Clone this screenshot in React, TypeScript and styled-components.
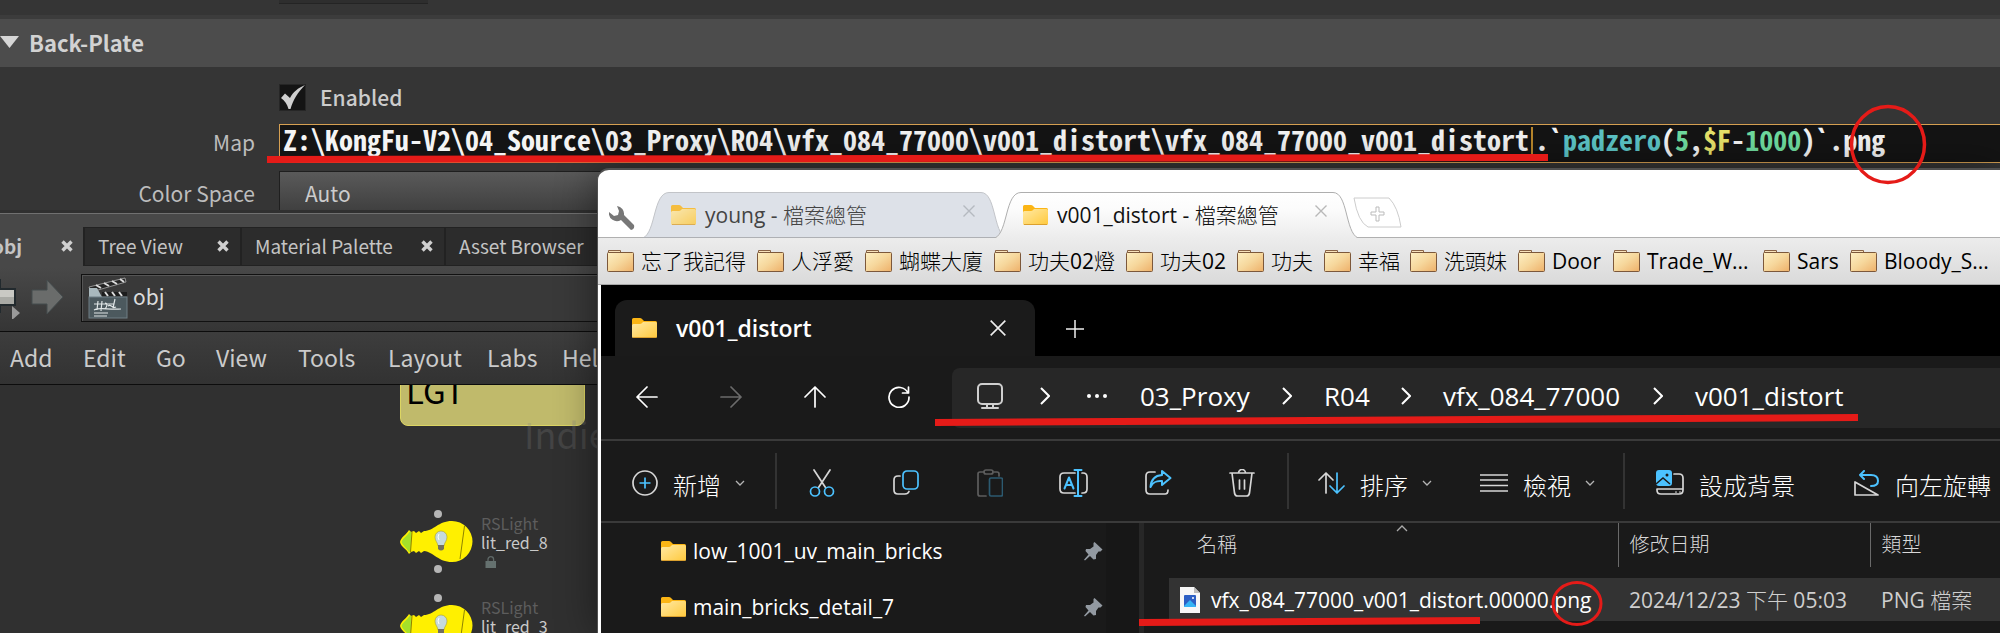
import React from "react";
import styled, { createGlobalStyle, css } from "styled-components";

const hostFont = `"Noto Sans CJK TC", "Noto Sans", sans-serif`;
const winFont = `"Open Sans", "Noto Sans CJK TC Light", "Noto Sans CJK TC", sans-serif`;
const codeFont = `"Noto Sans Mono CJK TC", "DejaVu Sans Mono", monospace`;

const GlobalStyle = createGlobalStyle`
  *, *::before, *::after { box-sizing: border-box; }
  body { margin: 0; background: #303030; }
  button, input, select { font: inherit; color: inherit; margin: 0; }
  button { background: none; border: 0; padding: 0; text-align: left; white-space: nowrap; }
  a { color: inherit; text-decoration: none; }
  svg { display: block; flex: none; }
`;

const Desktop = styled.div`
  position: relative;
  display: flex;
  flex-direction: column;
  min-height: 100vh;
  overflow: hidden;
  background: #303030;
  color: #cccccc;
  font: 21px/28px ${hostFont};
`;

/* ---------- parameter pane ---------- */

const PreviousRow = styled.div`
  height: 19px;
  padding-left: 279px;
  background: #353535;
  border-bottom: 4px solid #3c3c3c;
`;
const PreviousField = styled.div`
  width: 149px;
  height: 4px;
  background: #2e2e2e;
  border-bottom: 1px solid #242424;
`;
const SectionHeader = styled.h2`
  display: flex;
  align-items: center;
  gap: 10px;
  height: 48px;
  margin: 0;
  padding-bottom: 2px;
  background: #4c4c4c;
  color: #d2d2d2;
  font-size: 22px;
  font-weight: 700;
`;
const Params = styled.div`
  display: grid;
  grid-template-columns: 255px minmax(0, 1fr);
  grid-template-rows: 32px 39px 39px;
  gap: 8px 24px;
  align-items: center;
  height: 143px;
  padding-top: 17px;
  background: #353535;
`;
const ParamLabel = styled.label<{ $low?: boolean }>`
  padding: ${(p) => (p.$low ? "4px 0 0" : "0 0 4px")};
  text-align: right;
  color: #bdbdbd;
`;
const CheckRow = styled.label`
  grid-column: 2;
  align-self: start;
  display: flex;
  align-items: center;
  gap: 14px;
  height: 27px;
  font-weight: 500;
`;
const CheckText = styled.span`padding-bottom: 2px;`;
const CheckBoxInput = styled.input`
  appearance: none;
  width: 27px;
  height: 27px;
  background: #141414;
  border: 1px solid #262626;
`;
const CheckBox = styled.span`
  position: relative;
  display: block;
  height: 27px;
  svg { position: absolute; inset: 0; pointer-events: none; }
`;
const MapField = styled.div`
  position: relative;
  display: flex;
  align-items: center;
  height: 39px;
  padding: 0 0 10px 3px;
  background: #141414;
  border: 1px solid #d6a052;
  border-right: 0;
  font: 700 28px/36px ${codeFont};
  color: #f4f4f4;
  white-space: pre;
`;
const MapInput = styled.input`
  position: absolute;
  inset: 0;
  width: 100%;
  padding: 0 3px;
  border: 0;
  outline: 0;
  background: transparent;
  color: transparent;
  caret-color: #b8862b;
`;
const Caret = styled.span`
  width: 2px;
  height: 28px;
  margin: 4px 2px 0;
  background: #b8862b;
`;
const Tint = styled.span<{ $c: string }>`color: ${(p) => p.$c};`;
const ColorSelect = styled.select`
  appearance: none;
  width: 420px;
  height: 39px;
  padding: 4px 25px 0;
  border: 0;
  border-top: 1px solid #1f1f1f;
  border-left: 1px solid #1f1f1f;
  border-radius: 0;
  background: linear-gradient(#5a5a5a, #404040);
`;

/* ---------- network pane ---------- */

const PaneTabs = styled.div`
  display: flex;
  height: 55px;
  padding-top: 13px;
  background: #484848;
  border-top: 1px solid #707070;
  margin-top: 3px;
  font-size: 19px;
`;
const PaneTab = styled.div<{ $w: number; $active?: boolean }>`
  display: flex;
  align-items: center;
  justify-content: space-between;
  flex: none;
  width: ${(p) => p.$w}px;
  height: 39px;
  padding: 0 11px 2px 13px;
  background: #2c2c2c;
  border: solid #222;
  border-width: 1px 0 1px 2px;
  color: #c4c4c4;
  ${(p) => p.$active && css`
    background: #484848;
    border-color: transparent;
    padding: 0 10px 2px 0;
    font-weight: 700;
    & > button:first-child { margin-left: -10px; }
  `}
`;
const PathRow = styled.div`
  display: flex;
  align-items: center;
  gap: 17px;
  height: 63px;
  padding-bottom: 3px;
  background: linear-gradient(#484848, #353535);
`;
const PathField = styled.div`
  display: flex;
  align-items: center;
  flex: 1;
  gap: 5px;
  height: 48px;
  padding-left: 6px;
  background: #393939;
  border: 1px solid #111;
  box-shadow: inset 1px 1px #555;
  color: #dcdcdc;
`;
const PathName = styled.span`padding-bottom: 4px;`;
const MenuBar = styled.nav`
  display: flex;
  align-items: center;
  height: 54px;
  padding: 0 0 2px 10px;
  background: linear-gradient(#3d3d3d, #323232);
  border: solid #0c0c0c;
  border-width: 1px 0;
  font-size: 23px;
  color: #cbcbcb;
`;
const MenuItem = styled.button<{ $w: number }>`
  width: ${(p) => p.$w}px;
  flex: none;
`;
const Network = styled.main`
  position: relative;
  flex: 1;
  min-height: 246px;
  overflow: hidden;
`;
const StickyNote = styled.div`
  position: absolute;
  left: 400px;
  top: -20px;
  width: 185px;
  height: 61px;
  padding: 0 5px;
  border: 1px solid #dcd562;
  border-radius: 8px;
  background: #c0ba6b;
  color: #000;
  font-size: 33px;
  line-height: 48px;
`;
const Watermark = styled.div`
  position: absolute;
  left: 524px;
  top: 22px;
  font-size: 36px;
  line-height: 52px;
  color: rgba(130, 130, 130, 0.25);
`;
const LightNode = styled.div<{ $y: number }>`
  position: absolute;
  left: 400px;
  top: ${(p) => p.$y}px;
  display: flex;
  gap: 7px;
`;
const NodeText = styled.div`
  padding-top: 5px;
  font-size: 16px;
  line-height: 19px;
  color: #c9c9c9;
  svg { margin: 4px 0 0 4px; }
`;
const NodeType = styled.div`color: #5d5d5d;`;

/* ---------- explorer window ---------- */

const Window = styled.section`
  position: absolute;
  left: 597px;
  right: 0;
  top: 168px;
  bottom: 0;
  display: flex;
  flex-direction: column;
  border: solid #505050;
  border-width: 2px 0 0 1px;
  border-radius: 12px 0 0 0;
  padding-left: 3px;
  background: #fff;
  overflow: hidden;
  font: 21px/28px ${winFont};
  color: #000;
`;
const WindowShadow = styled.div`
  position: absolute;
  left: 597px;
  right: 0;
  top: 168px;
  bottom: 0;
  border-radius: 12px 0 0 0;
  box-shadow: 0 0 40px rgba(0, 0, 0, 0.45);
`;
const BrowserTabs = styled.div`
  display: flex;
  align-items: flex-end;
  height: 68px;
  flex: none;
  margin-left: -3px;
  border-bottom: 1px solid #b0b0b0;
`;
const WrenchButton = styled.button`
  align-self: flex-end;
  width: 45px;
  height: 45px;
  padding: 6px 0 0 11px;
`;
const BrowserTab = styled.div<{ $active?: boolean }>`
  position: relative;
  display: flex;
  align-items: center;
  flex: none;
  width: 364px;
  height: 46px;
  gap: 8px;
  padding: 0 32px 0 28px;
  color: ${(p) => (p.$active ? "#111" : "#444")};
  margin: 0 -12px -1px 0;
  ${(p) => p.$active && css`z-index: 1;`}
  & > svg:first-child { position: absolute; inset: 0; }
  & > * { position: relative; }
  & > button:last-child { margin: 0 0 8px auto; }
`;
const NewTabButton = styled.button`
  margin: 0 0 9px 6px;
`;
const Bookmarks = styled.nav`
  display: flex;
  align-items: center;
  flex: none;
  height: 47px;
  margin-left: -3px;
  padding-left: 9px;
  background: linear-gradient(#ececec, #dadada);
  border-bottom: 1px solid #a8a8a8;
`;
const Bookmark = styled.a<{ $w: number }>`
  display: flex;
  align-items: center;
  flex: none;
  gap: 7px;
  width: ${(p) => p.$w}px;
  white-space: nowrap;
`;
const Explorer = styled.div`
  flex: 1;
  display: flex;
  flex-direction: column;
  background: #1a1a1a;
  color: #fff;
`;
const TitleBar = styled.div`
  display: flex;
  align-items: flex-end;
  height: 71px;
  flex: none;
  padding-left: 14px;
  background: #000;
`;
const ExplorerTab = styled.div`
  display: flex;
  align-items: center;
  width: 420px;
  height: 56px;
  padding: 0 29px 0 17px;
  border-radius: 12px 12px 0 0;
  background: #1b1b1b;
  font-size: 23px;
  font-weight: 600;
  & > button:first-child { display: flex; align-items: center; gap: 18px; }
  & > button:last-child { margin-left: auto; }
`;
const AddTab = styled.button`
  width: 80px;
  height: 54px;
  padding-left: 31px;
`;
const NavRow = styled.div`
  display: flex;
  align-items: center;
  height: 83px;
  flex: none;
`;
const NavButton = styled.button`
  display: grid;
  place-items: center;
  flex: none;
  width: 84px;
  height: 60px;
`;
const NavButtons = styled.div`
  display: flex;
  flex: none;
  width: 351px;
  padding: 0 0 2px 4px;
`;
const AddressBar = styled.div`
  display: flex;
  align-items: center;
  flex: 1;
  height: 60px;
  padding: 0 0 3px 25px;
  border-radius: 8px 0 0 8px;
  background: #272727;
  font-size: 26px;
  line-height: 36px;
`;
const Ellipsis = styled.button`margin-right: 33px;`;
const Crumb = styled.a<{ $w: number }>`
  flex: none;
  width: ${(p) => p.$w}px;
  white-space: nowrap;
`;
const CrumbChevron = styled.svg<{ $gap?: number }>`
  margin: 0 ${(p) => p.$gap ?? 32}px;
`;
const Toolbar = styled.div`
  display: flex;
  align-items: center;
  height: 84px;
  flex: none;
  border: solid #3a3a3a;
  border-width: 2px 0;
  font-size: 24px;
  line-height: 36px;
`;
const ToolButton = styled.button<{ $w: number; $lead?: number }>`
  display: flex;
  align-items: center;
  flex: none;
  gap: 14px;
  width: ${(p) => p.$w}px;
  padding: 4px 0 0 ${(p) => p.$lead ?? 31}px;
`;
const ToolLabel = styled.span`padding: 5px 0 0 1px;`;
const Rule = styled.span`
  flex: none;
  width: 2px;
  height: 56px;
  background: #333;
`;
const ToolIcons = styled.div`
  display: flex;
  margin: 0 3px;
  padding-top: 3px;
`;
const Body = styled.div`
  flex: 1;
  display: flex;
  min-height: 110px;
  overflow: hidden;
`;
const SidePane = styled.nav`
  width: 543px;
  flex: none;
  border-right: 5px solid #272727;
  background: linear-gradient(90deg, #1a1a1a 505px, #171717 505px);
`;
const SideItem = styled.a`
  display: flex;
  align-items: center;
  gap: 6px;
  height: 56px;
  padding: 0 36px 0 60px;
  white-space: nowrap;
  & > svg:last-child { margin-left: auto; }
`;
const Files = styled.div`
  flex: 1;
  padding-left: 25px;
`;
const FileTable = styled.table`
  width: 100%;
  table-layout: fixed;
  border-collapse: collapse;
  white-space: nowrap;
  th { position: relative; height: 44px; padding: 0 11px; font-weight: 400; text-align: left; font-size: 20px; color: #d8d8d8; }
  th:first-child { width: 449px; padding-left: 28px; }
  th:nth-child(2) { width: 252px; }
  th + th { border-left: 1px solid #6a6a6a; }
  tbody::before { content: ""; display: block; height: 11px; }
  td { height: 43px; padding: 0 11px; background: #333; color: #cfcfcf; }
  td:first-child { color: #fff; }
`;
const SortMark = styled.svg`
  position: absolute;
  left: 227px;
  top: 2px;
`;
const FileName = styled.span`
  display: flex;
  align-items: center;
  gap: 11px;
`;
const Marks = styled.svg`
  position: absolute;
  left: 0;
  top: 0;
  pointer-events: none;
`;

/* ---------- icons ---------- */

const PaneClose = () => (
  <svg width="12" height="12" viewBox="0 0 12 12" stroke="#d0d0d0" strokeWidth="3.4"><path d="M1.5 1.5 10.5 10.5M10.5 1.5 1.5 10.5" /></svg>
);
const ThinClose = ({ size, color, w }: { size: number; color: string; w: number }) => (
  <svg width={size} height={size} viewBox="0 0 12 12" stroke={color} strokeWidth={w}><path d="M.5.5 11.5 11.5M11.5.5.5 11.5" /></svg>
);
const Folder = ({ faded }: { faded?: boolean }) => (
  <svg width="26" height="20" viewBox="0 0 26 20" opacity={faded ? 0.8 : 1}>
    <defs><linearGradient id="fy" x1="0" y1="0" x2="1" y2="1"><stop offset="0" stopColor="#ffe9a4" /><stop offset="1" stopColor="#ffc93c" /></linearGradient></defs>
    <path d="M0 1.5Q0 0 1.5 0H8q1 0 1.8.8L12 3h11.500Q25 3 25 4.500V12H0z" fill="#fbb515" />
    <path d="M0 7.500Q0 6 1.500 6H8q1 0 1.800-.800L11 4h12.500Q25 4 25 5.500v13Q25 20 23.500 20h-22Q0 20 0 18.500z" fill="url(#fy)" />
    <path d="M1 19.500h23" stroke="#dba02e" />
  </svg>
);
const BookmarkFolder = () => (
  <svg width="27" height="24" viewBox="0 0 27 24">
    <defs><linearGradient id="fb" x1="0" y1="0" x2="1" y2="1"><stop offset="0" stopColor="#fdf0c4" /><stop offset=".5" stopColor="#f6d79c" /><stop offset="1" stopColor="#eeb069" /></linearGradient></defs>
    <path d="M1.500 5V1.500h12V5" fill="#f9e3bd" stroke="#8a6446" />
    <rect x=".5" y="3.500" width="26" height="19" rx="1" fill="url(#fb)" stroke="#7c583b" />
  </svg>
);
const Chevron = () => (
  <svg width="10" height="6" viewBox="0 0 10 6" fill="none" stroke="#b5b5b5" strokeWidth="1.300"><path d="M1 1 5 5 9 1" /></svg>
);
const Pin = () => (
  <svg width="19" height="19" viewBox="0 0 19 19" fill="#9299a1"><path d="M10.500 0 18.500 7.500 16.500 9.500 14.500 9.500 12 13 12 17 9.500 17.500 6 14 1 18.500 0 17.800 4.500 12.500 1.500 9 2 7 6 7 9.500 4.500 9.500 1z" /></svg>
);
const Bulb = () => (
  <svg width="74" height="66" viewBox="0 0 74 66">
    <circle cx="38" cy="5" r="4" fill="#b5b5b5" /><circle cx="38" cy="60" r="4" fill="#b5b5b5" />
    <path d="M0 33C1 28 6 26 9 21l2 2 3-1 2 2 3-2 2 2 3-2C34 22 38 12 52 12a20.500 20.500 0 0 1 0 41C38 53 34 43 24 42l-3 2-2-2-3 2-2-2-3 1-2 2C6 39 1 38 0 33z" fill="#fff000" />
    <path d="M1.500 33C3 29 7 27 10 22.500l1.500 1-1 19L9 43C6 38 3 37 1.500 33z" fill="#a5e02a" />
    <path d="M12 23 10.500 43M64.500 17 60 50" stroke="#8d8300" fill="none" />
    <path d="M41 22a6 6 0 0 1 6 6c0 4-2.500 5-3 9h-6c-.5-4-3-5-3-9a6 6 0 0 1 6-6z" fill="#c5dade" stroke="#a69c33" strokeWidth=".6" />
    <path d="M38 36h6v4q-3 3-6 0z" fill="#74705f" /><path d="M39 25q-2 3 0 6" stroke="#fff" fill="none" />
  </svg>
);
const Lock = () => (
  <svg width="12" height="12" viewBox="0 0 12 12"><path d="M3 6V3.500a2.800 2.800 0 0 1 5.600 0V6" fill="none" stroke="#5f6968" strokeWidth="1.300" /><rect x=".5" y="5" width="10.500" height="7" fill="#65716f" /></svg>
);
const Clapper = () => (
  <svg width="40" height="42" viewBox="0 0 40 42">
    <path d="M1 10 37 1l1 4L3 15z" fill="#252525" stroke="#bbb" strokeWidth=".7" />
    <path d="m8 8 5 3m3-5 5 3m3-5 5 3m3-5 4 3" stroke="#ddd" strokeWidth="2" />
    <path d="M1 11 9 11 14 20H1z" fill="#a9b8bd" />
    <path d="M14 15h25v4H14z" fill="#1d1d1d" /><path d="m17 15 3 4m4-4 3 4m4-4 3 4" stroke="#ddd" strokeWidth="2" />
    <rect x="1" y="20" width="38" height="21" fill="#4c595e" stroke="#6f7f85" />
    <path d="M6 27h20M10 24l-1 9m5-9-1 10m4-8c3 0 2 4 0 6m3-3c3-3 4 3 8 1m-1-8-2 9M6 33c6-3 14 0 27-1M6 36h14M6 39h13" fill="none" stroke="#dfe5e6" strokeWidth="1.200" />
  </svg>
);
const line = { fill: "none", stroke: "#d6d6d6", strokeWidth: 1.7, strokeLinecap: "round", strokeLinejoin: "round" } as const;
const BLUE = "#4cc2ff";

const toolIcons = [
  { name: "剪下", art: <svg width="26" height="28" viewBox="0 0 26 28" {...line}><path d="M5 1 16.500 18.500M21 1 9.500 18.500" /><g stroke={BLUE}><circle cx="6" cy="22.500" r="4.500" /><circle cx="20" cy="22.500" r="4.500" /></g></svg> },
  { name: "複製", art: <svg width="26" height="28" viewBox="0 0 26 28" {...line}><path d="M7 7H5Q1 7 1 11v10q0 4 4 4h7q3 0 4-2.500" /><rect x="10" y="2" width="15" height="18" rx="4" stroke={BLUE} /></svg> },
  { name: "貼上", art: <svg width="26" height="28" viewBox="0 0 26 28" {...line} stroke="#5e5e5e"><path d="M7 3H3Q1 3 1 5v20q0 2 2 2h6M17 3h3q2 0 2 2v2" /><rect x="7" y="1" width="9" height="4" rx="2" /><rect x="12.500" y="9" width="13" height="18" rx="1.500" stroke="#2c5a70" /></svg> },
  { name: "重新命名", art: <svg width="30" height="28" viewBox="0 0 30 28" {...line}><path d="M16 4H5Q1 4 1 8v12q0 4 4 4h11M23 4h1q4 0 4 4v12q0 4-4 4h-1" /><path d="M5.500 19.500 10 8.500l4.500 11M7 16h6M15.500 1h7M15.500 27h7M19 1v26" stroke={BLUE} strokeWidth="2" /></svg> },
  { name: "共用", art: <svg width="27" height="26" viewBox="0 0 27 26" {...line}><path d="M10 2H5Q1 2 1 6v14q0 4 4 4h15q3 0 3-4" /><path d="M17 1l8.500 7-8.500 7v-4C11 10.500 8 12 5.500 17 6 10 10 5.500 17 5z" stroke={BLUE} strokeWidth="2" /></svg> },
  { name: "刪除", art: <svg width="26" height="28" viewBox="0 0 26 28" {...line}><path d="M1 4h24M9.500 4a3.500 3.500 0 0 1 7 0M3 4l2.500 20q.5 3 3 3h9q2.500 0 3-3L23 4M10.500 11v9M15.500 11v9" /></svg> },
];

const bookmarks: [string, number][] = [
  ["忘了我記得", 150], ["人浮愛", 108], ["蝴蝶大廈", 129], ["功夫02燈", 132], ["功夫02", 111], ["功夫", 87],
  ["幸福", 86], ["洗頭妹", 108], ["Door", 95], ["Trade_W...", 150], ["Sars", 87], ["Bloody_S...", 150],
];
const menus: [string, number][] = [
  ["Add", 73], ["Edit", 73], ["Go", 60], ["View", 82], ["Tools", 90], ["Layout", 99], ["Labs", 75], ["Help", 60],
];
const nodes: [string, number][] = [["lit_red_8", 124], ["lit_red_3", 208]];
const pathText = "Z:\\KongFu-V2\\04_Source\\03_Proxy\\R04\\vfx_084_77000\\v001_distort\\vfx_084_77000_v001_distort";

const TabShape = ({ active }: { active?: boolean }) => (
  <svg width="364" height="46" viewBox="0 0 364 46">
    <defs><linearGradient id="ta" x1="0" y1="0" x2="0" y2="1"><stop offset="0" stopColor="#fff" /><stop offset=".4" stopColor="#fbfbfb" /><stop offset="1" stopColor="#ececec" /></linearGradient></defs>
    <path d="M0 46C13 40 10 .5 26 .5H338C353 .5 350 40 363 46" fill={active ? "url(#ta)" : "#dde1e8"} stroke={active ? "#aeaeae" : "#c2c4c8"} />
    {!active && <path d="M0 45.500h363" stroke="#aeb0b4" />}
  </svg>
);

const CrumbSep = ({ gap }: { gap?: number }) => (
  <CrumbChevron $gap={gap} width="10" height="18" viewBox="0 0 10 18" fill="none" stroke="#fff" strokeWidth="2"><path d="M1 1 9 9 1 17" /></CrumbChevron>
);

export default function App() {
  return (
    <Desktop>
      <GlobalStyle />
      <PreviousRow><PreviousField /></PreviousRow>
      <SectionHeader>
        <svg width="19" height="12" viewBox="0 0 19 12"><path d="M0 0h19L9.500 12z" fill="#d6d6d6" /></svg>
        Back-Plate
      </SectionHeader>
      <Params>
        <CheckRow>
          <CheckBox>
            <CheckBoxInput type="checkbox" defaultChecked />
            <svg width="27" height="27" viewBox="0 0 27 27"><path d="M2 14 6 9.500 11 14C14 8 19 4 26 1 19 8 14 16 11.500 25H9.500C8 20 6 17 2 14z" fill="#cfcfcf" /></svg>
          </CheckBox>
          <CheckText>Enabled</CheckText>
        </CheckRow>
        <ParamLabel htmlFor="map">Map</ParamLabel>
        <MapField>
          <span>{pathText}</span><Caret />
          <span>.`</span><Tint $c="#5cc4c6">padzero</Tint><span>(</span><Tint $c="#6fdc9f">5</Tint><span>,</span>
          <Tint $c="#e8e36a">$F</Tint><span>-</span><Tint $c="#6fdc9f">1000</Tint><span>)`.png</span>
          <MapInput id="map" type="text" />
        </MapField>
        <ParamLabel htmlFor="space" $low>Color Space</ParamLabel>
        <ColorSelect id="space"><option>Auto</option></ColorSelect>
      </Params>

      <PaneTabs>
        <PaneTab $w={83} $active><button>obj</button><button aria-label="Close obj"><PaneClose /></button></PaneTab>
        <PaneTab $w={157}><button>Tree View</button><button aria-label="Close Tree View"><PaneClose /></button></PaneTab>
        <PaneTab $w={204}><button>Material Palette</button><button aria-label="Close Material Palette"><PaneClose /></button></PaneTab>
        <PaneTab $w={204}><button>Asset Browser</button></PaneTab>
      </PaneTabs>
      <PathRow>
        <svg width="64" height="42" viewBox="0 0 64 42">
          <path d="M0 2v10h15v16H0v8" fill="none" stroke="#222a2e" strokeWidth="2" />
          <path d="M0 13h14v14H0z" fill="#c9c9c4" /><path d="M0 20h14v7H0z" fill="#a9aaa5" />
          <path d="m12 29 8 7-8 7z" fill="#9a9a9a" />
          <path d="M32 13h15V3l16 17-16 17V27H32z" fill="#6a6c6b" stroke="#444c4e" />
        </svg>
        <PathField><Clapper /><PathName>obj</PathName></PathField>
      </PathRow>
      <MenuBar>{menus.map(([t, w]) => <MenuItem key={t} $w={w}>{t}</MenuItem>)}</MenuBar>
      <Network>
        <StickyNote>LGT</StickyNote>
        <Watermark>Indie Edition</Watermark>
        {nodes.map(([name, y]) => (
          <LightNode key={name} $y={y}>
            <Bulb />
            <NodeText><NodeType>RSLight</NodeType>{name}<Lock /></NodeText>
          </LightNode>
        ))}
      </Network>

      <WindowShadow />
      <Window>
        <BrowserTabs>
          <WrenchButton aria-label="設定">
            <svg width="26" height="26" viewBox="0 0 26 26"><path d="M8 1A8 8 0 0 1 15 10L25 20Q26 24 22 25L12 15A8 8 0 0 1 0 7L5 11 9 10 10 6z" fill="#777" /></svg>
          </WrenchButton>
          <BrowserTab><TabShape /><Folder faded /><span>young - 檔案總管</span><button aria-label="關閉"><ThinClose size={12} color="#b5b9c0" w={1.4} /></button></BrowserTab>
          <BrowserTab $active><TabShape active /><Folder /><span>v001_distort - 檔案總管</span><button aria-label="關閉"><ThinClose size={12} color="#b8b8b8" w={1.4} /></button></BrowserTab>
          <NewTabButton aria-label="新增分頁">
            <svg width="50" height="31" viewBox="0 0 50 31" fill="none" stroke="#ccc"><path d="M1 1H36Q45 10 48 30H15Q5 25 1 1z" /><path d="M18 15h5v-5h3v5h5v3h-5v6h-3v-6h-5z" stroke="#bbb" /></svg>
          </NewTabButton>
        </BrowserTabs>
        <Bookmarks>
          {bookmarks.map(([t, w]) => <Bookmark key={t} href="#" $w={w}><BookmarkFolder />{t}</Bookmark>)}
        </Bookmarks>
        <Explorer>
          <TitleBar>
            <ExplorerTab>
              <button><Folder />v001_distort</button>
              <button aria-label="關閉分頁"><ThinClose size={16} color="#eee" w={1.2} /></button>
            </ExplorerTab>
            <AddTab aria-label="新增索引標籤"><svg width="18" height="18" viewBox="0 0 18 18" stroke="#eee" strokeWidth="1.500"><path d="M9 0v18M0 9h18" /></svg></AddTab>
          </TitleBar>
          <NavRow>
            <NavButtons>
              <NavButton aria-label="上一頁"><svg width="22" height="22" viewBox="0 0 22 22" {...line} stroke="#fff"><path d="M21 11H1M11 1 1 11 11 21" /></svg></NavButton>
              <NavButton aria-label="下一頁"><svg width="22" height="22" viewBox="0 0 22 22" {...line} stroke="#6b6b6b"><path d="M1 11H21M11 1 21 11 11 21" /></svg></NavButton>
              <NavButton aria-label="上移"><svg width="22" height="22" viewBox="0 0 22 22" {...line} stroke="#fff"><path d="M11 21V1M1 11 11 1 21 11" /></svg></NavButton>
              <NavButton aria-label="重新整理"><svg width="22" height="22" viewBox="0 0 22 22" {...line} stroke="#fff"><path d="M20 7A10 10 0 1 0 21 11M20.500 1V7H14.500" /></svg></NavButton>
            </NavButtons>
            <AddressBar>
              <svg width="26" height="26" viewBox="0 0 26 26" {...line} stroke="#cfcfcf" strokeWidth="2"><rect x="1" y="1" width="24" height="20" rx="4" /><path d="M10 21v4M16 21v4M5 25h16" /></svg>
              <CrumbSep gap={37} />
              <Ellipsis aria-label="更多"><svg width="20" height="4" viewBox="0 0 20 4" fill="#fff"><circle cx="2" cy="2" r="2" /><circle cx="10" cy="2" r="2" /><circle cx="18" cy="2" r="2" /></svg></Ellipsis>
              <Crumb href="#" $w={110}>03_Proxy</Crumb>
              <CrumbSep />
              <Crumb href="#" $w={45}>R04</Crumb>
              <CrumbSep />
              <Crumb href="#" $w={178}>vfx_084_77000</Crumb>
              <CrumbSep />
              <Crumb href="#" $w={152}>v001_distort</Crumb>
            </AddressBar>
          </NavRow>
          <Toolbar>
            <ToolButton $w={174}>
              <svg width="26" height="26" viewBox="0 0 26 26" {...line}><circle cx="13" cy="13" r="12" /><path d="M13 7.500v11M7.500 13h11" stroke={BLUE} strokeLinecap="butt" /></svg>
              <ToolLabel>新增</ToolLabel><Chevron />
            </ToolButton>
            <Rule />
            <ToolIcons>{toolIcons.map((i) => <NavButton key={i.name} aria-label={i.name}>{i.art}</NavButton>)}</ToolIcons>
            <Rule />
            <ToolButton $w={162} $lead={29}>
              <svg width="27" height="22" viewBox="0 0 27 22" {...line}><path d="M8 21V1M1 8 8 1 15 8" /><path d="M19 1V21M12 14 19 21 26 14" stroke={BLUE} /></svg>
              <ToolLabel>排序</ToolLabel><Chevron />
            </ToolButton>
            <ToolButton $w={172} $lead={29}>
              <svg width="28" height="20" viewBox="0 0 28 20" {...line}><path d="M0 2h28M0 7h28M0 12.500h28M0 18h28" /></svg>
              <ToolLabel>檢視</ToolLabel><Chevron />
            </ToolButton>
            <Rule />
            <ToolButton $w={198}>
              <svg width="28" height="26" viewBox="0 0 28 26"><g {...line}><path d="M18 4h5q4 0 4 4v12q0 4-4 4H5q-4 0-4-4v-1h26" /><path d="M20 22h0M24 22h0" /></g><rect width="16" height="16" rx="3" fill={BLUE} /><path d="m0 14 7-6 7 6" stroke="#1a1a1a" strokeWidth="1.500" fill="none" /><circle cx="11" cy="5" r="1.500" fill="#1a1a1a" /></svg>
              <ToolLabel>設成背景</ToolLabel>
            </ToolButton>
            <ToolButton $w={176}>
              <svg width="26" height="26" viewBox="0 0 26 26" {...line}><path d="M1 12V25H24z" /><path d="M10 1 6 5l4 4M6 5h11q7 0 7 6 0 5-7 5" stroke={BLUE} strokeWidth="2" /></svg>
              <ToolLabel>向左旋轉</ToolLabel>
            </ToolButton>
          </Toolbar>
          <Body>
            <SidePane>
              <SideItem href="#"><Folder />low_1001_uv_main_bricks<Pin /></SideItem>
              <SideItem href="#"><Folder />main_bricks_detail_7<Pin /></SideItem>
            </SidePane>
            <Files>
              <FileTable>
                <thead><tr><th>名稱<SortMark width="12" height="7" viewBox="0 0 12 7" fill="none" stroke="#aaa" strokeWidth="1.300"><path d="M1 6 6 1 11 6" /></SortMark></th><th>修改日期</th><th>類型</th></tr></thead>
                <tbody><tr>
                  <td><FileName>
                    <svg width="20" height="26" viewBox="0 0 20 26"><path d="M0 0H14L20 6V26H0z" fill="#f7f7f7" /><path d="M14 0v6h6z" fill="#bbb" /><rect x="4" y="8" width="12" height="12" rx="1" fill="#2c5fc4" /><path d="m4 19 6-6 6 6v1H4z" fill="#35b4f5" /><circle cx="13" cy="11" r="1" fill="#fff" /></svg>
                    vfx_084_77000_v001_distort.00000.png
                  </FileName></td>
                  <td>2024/12/23 下午 05:03</td>
                  <td>PNG 檔案</td>
                </tr></tbody>
              </FileTable>
            </Files>
          </Body>
        </Explorer>
      </Window>

      <Marks width="2000" height="633" viewBox="0 0 2000 633" fill="none" stroke="#e51b18">
        <path d="M267 159.500 1548 157.500M935 422.500 1858 417.500M1139 622.500 1480 620.500" strokeWidth="7" />
        <ellipse cx="1888" cy="144.500" rx="36.500" ry="38" strokeWidth="3.500" />
        <ellipse cx="1577" cy="603.500" rx="24" ry="21" strokeWidth="3" />
      </Marks>
    </Desktop>
  );
}
